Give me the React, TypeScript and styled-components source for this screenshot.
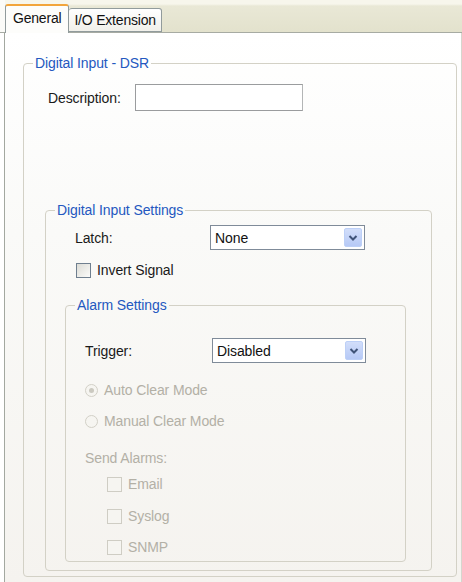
import React from "react";
import styled, { createGlobalStyle } from "styled-components";

const Global = createGlobalStyle`
  html, body { margin: 0; padding: 0; background: #ffffff; }
  body { font-family: "Liberation Sans", Arial, sans-serif; font-size: 14px; color: #1a1a1a; }
  * { box-sizing: border-box; }
`;

const Window = styled.div`
  width: 462px;
  height: 582px;
  display: flex;
  flex-direction: column;
  overflow: hidden;
  background: #ffffff;
`;

const TabStrip = styled.div`
  height: 33px;
  display: flex;
  align-items: flex-end;
  padding-left: 5px;
  border-bottom: 1px solid #a7aba3;
  background: linear-gradient(
    to right,
    #fbfbf8 0,
    #fbfbf8 5px,
    transparent 5px
  ),
  linear-gradient(#f7f6ec 0, #f7f6ec 4px, #e9e8d6 6px, #e3e2cd 31px);
`;

const Tab = styled.div<{ $active?: boolean }>`
  position: relative;
  height: ${(p) => (p.$active ? "29px" : "24px")};
  margin-bottom: ${(p) => (p.$active ? "-1px" : "0")};
  padding: 0 ${(p) => (p.$active ? "7px" : "5px")} 0 ${(p) => (p.$active ? "7px" : "5px")};
  display: flex;
  align-items: center;
  padding-bottom: ${(p) => (p.$active ? "3px" : "1px")};
  border: 1px solid #919b9c;
  border-bottom: ${(p) => (p.$active ? "none" : "1px solid #919b9c")};
  border-left: ${(p) => (p.$active ? "1px solid #919b9c" : "none")};
  border-top: ${(p) => (p.$active ? "2px solid #f2a53c" : "1px solid #919b9c")};
  border-radius: 3px 3px 0 0;
  background: ${(p) =>
    p.$active ? "#fdfdfb" : "linear-gradient(#ffffff, #f1f0ea)"};
  color: #111;
  font-size: 14px;
  letter-spacing: -0.2px;
  z-index: ${(p) => (p.$active ? 2 : 1)};
`;

const Panel = styled.div`
  flex: 1;
  margin-left: 4px;
  border-left: 1px solid #a3a8a0;
  border-right: 1px solid #d6d6ce;
  padding: 22px 4px 4px 18px;
  background: linear-gradient(#ffffff 0, #fafaf8 200px, #f5f3ef 100%);
  display: flex;
  flex-direction: column;
`;

const Group = styled.fieldset<{ $ml?: number; $mr?: number; $mt?: number; $mb?: number; $pb?: number }>`
  margin: ${(p) => p.$mt ?? 0}px ${(p) => p.$mr ?? 0}px ${(p) => p.$mb ?? 0}px
    ${(p) => p.$ml ?? 0}px;
  padding: 0 0 ${(p) => p.$pb ?? 0}px 0;
  min-width: 0;
  border: 1px solid #d3d1c6;
  border-radius: 4px;
  display: flex;
  flex-direction: column;
`;

const Legend = styled.legend`
  margin-left: 9px;
  padding: 0 2px;
  line-height: 16px;
  height: 16px;
  color: #2458c0;
  font-size: 14px;
  letter-spacing: -0.1px;
`;

const Row = styled.div<{ $mt: number; $pl: number; $h?: number }>`
  display: flex;
  align-items: center;
  margin-top: ${(p) => p.$mt}px;
  padding-left: ${(p) => p.$pl}px;
  height: ${(p) => p.$h ?? 16}px;
`;

const Label = styled.span<{ $w?: number; $disabled?: boolean }>`
  width: ${(p) => (p.$w ? `${p.$w}px` : "auto")};
  flex: none;
  color: ${(p) => (p.$disabled ? "#b3b0a6" : "#1a1a1a")};
  letter-spacing: -0.1px;
  white-space: nowrap;
`;

const TextBox = styled.div`
  width: 168px;
  height: 27px;
  border: 1px solid #9a9c9e;
  border-right-color: #b3b5b6;
  background: #ffffff;
`;

const SelectBox = styled.div<{ $w: number }>`
  width: ${(p) => p.$w}px;
  height: 25px;
  border: 1px solid #7f8b99;
  background: #ffffff;
  display: flex;
  align-items: center;
  padding: 2px 2px 2px 4px;
`;

const SelectText = styled.span`
  flex: 1;
  color: #111;
  letter-spacing: -0.1px;
`;

const ArrowButton = styled.div`
  width: 18px;
  height: 19px;
  border: 1px solid #bdd0f7;
  border-radius: 2px;
  background: linear-gradient(#d2defa, #b6c9f6);
  display: flex;
  align-items: center;
  justify-content: center;
`;

const Check = styled.span<{ $disabled?: boolean }>`
  width: 15px;
  height: 15px;
  flex: none;
  margin-right: 6px;
  border: 1px solid ${(p) => (p.$disabled ? "#cfcdc4" : "#6f7f8f")};
  background: ${(p) =>
    p.$disabled ? "#f6f5f1" : "linear-gradient(135deg, #dcdcd6, #fbfbf9)"};
`;

const Radio = styled.span<{ $checked?: boolean }>`
  width: 13px;
  height: 13px;
  flex: none;
  margin-right: 6px;
  border-radius: 50%;
  border: 1px solid #d2d0c7;
  background: #f6f5f1;
  display: flex;
  align-items: center;
  justify-content: center;
  &::after {
    content: "";
    width: 5px;
    height: 5px;
    border-radius: 50%;
    background: ${(p) => (p.$checked ? "#cbc9c0" : "transparent")};
  }
`;

const Chevron = () => (
  <svg width="10" height="8" viewBox="0 0 10 8">
    <path d="M1.5 2 L5 5.5 L8.5 2" fill="none" stroke="#3f5378" strokeWidth="2" />
  </svg>
);

const Select = ({ value, w }: { value: string; w: number }) => (
  <SelectBox $w={w}>
    <SelectText>{value}</SelectText>
    <ArrowButton>
      <Chevron />
    </ArrowButton>
  </SelectBox>
);

export default function App() {
  return (
    <Window>
      <Global />
      <TabStrip>
        <Tab $active>General</Tab>
        <Tab>I/O Extension</Tab>
      </TabStrip>
      <Panel>
        <Group $mb={0}>
          <Legend>Digital Input - DSR</Legend>
          <Row $mt={13} $pl={24} $h={27}>
            <Label $w={87}>Description:</Label>
            <TextBox />
          </Row>
          <Group $mt={91} $ml={21} $mr={24} $mb={5}>
            <Legend>Digital Input Settings</Legend>
            <Row $mt={7} $pl={29} $h={25}>
              <Label $w={135}>Latch:</Label>
              <Select value="None" w={155} />
            </Row>
            <Row $mt={12} $pl={30}>
              <Check />
              <Label>Invert Signal</Label>
            </Row>
            <Group $mt={19} $ml={19} $mr={25} $mb={8} $pb={6}>
              <Legend>Alarm Settings</Legend>
              <Row $mt={25} $pl={19} $h={25}>
                <Label $w={127}>Trigger:</Label>
                <Select value="Disabled" w={154} />
              </Row>
              <Row $mt={19} $pl={19}>
                <Radio $checked />
                <Label $disabled>Auto Clear Mode</Label>
              </Row>
              <Row $mt={15} $pl={19}>
                <Radio />
                <Label $disabled>Manual Clear Mode</Label>
              </Row>
              <Row $mt={21} $pl={19}>
                <Label $disabled>Send Alarms:</Label>
              </Row>
              <Row $mt={10} $pl={41}>
                <Check $disabled />
                <Label $disabled>Email</Label>
              </Row>
              <Row $mt={16} $pl={41}>
                <Check $disabled />
                <Label $disabled>Syslog</Label>
              </Row>
              <Row $mt={15} $pl={41}>
                <Check $disabled />
                <Label $disabled>SNMP</Label>
              </Row>
            </Group>
          </Group>
        </Group>
      </Panel>
    </Window>
  );
}
